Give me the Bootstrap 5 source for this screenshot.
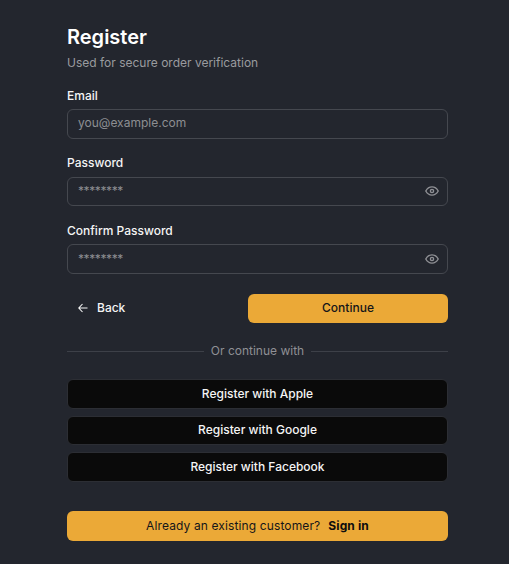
<!doctype html>
<html lang="en">
<head>
<meta charset="utf-8">
<title>Register</title>
<link href="https://cdn.jsdelivr.net/npm/bootstrap@5.3.0/dist/css/bootstrap.min.css" rel="stylesheet">
<style>
html,body{height:100%;}
body{background:#23262e;color:#f5f5f5;font-family:Inter,"Liberation Sans",sans-serif;overflow:hidden;}
.shell{width:381px;margin-left:67px;padding-top:24.5px;}
.ttl{font-size:20px;font-weight:600;line-height:24px;margin:0 0 5px;color:#fff;}
.sub{font-size:12px;line-height:18px;color:#9a9b9f;margin:0 0 15px;}
.fld{height:67.5px;}
.lbl{display:block;font-size:12px;font-weight:500;line-height:18px;margin:0 0 4.5px;color:#f5f5f5;}
.inp-wrap{position:relative;}
.inp{display:block;width:100%;height:29.5px;background:transparent;border:1px solid #45484f;border-radius:6px;padding:0 10px 1px;font-size:12px;color:#fff;outline:0;}
.inp::placeholder{color:#8d8e92;opacity:1;}
.inp-top{padding-bottom:3px;}
.inp-pw::placeholder{letter-spacing:-.4px;}
.eye{position:absolute;right:9px;top:7.5px;width:14px;height:14px;}
.acts{margin-top:4.5px;height:29.5px;}
.back{font-size:12px;font-weight:500;color:#f5f5f5;padding-left:11px;gap:9px;border:0;background:none;}
.cta{width:200px;height:29.5px;background:#eba937;border:0;border-radius:6px;color:#14151a;font-size:12px;font-weight:500;}
.sep{margin:18px 0 18px;height:20px;gap:7px;font-size:12px;color:#8f9095;}
.sep i{flex:1;height:1px;background:#3d4048;}
.soc{height:29.5px;background:#0a0a0a;border:1px solid #2c2e34;border-radius:6px;color:#f5f5f5;font-size:12px;font-weight:500;width:100%;}
.stack{gap:7px;}
.ban{margin-top:29px;height:30px;background:#eba937;border-radius:6px;color:#14151a;font-size:12px;gap:8px;letter-spacing:.12px;}
.ban b{font-weight:700;color:#0d0d0f;}
</style>
</head>
<body>
<main class="shell">
  <h1 class="ttl">Register</h1>
  <p class="sub">Used for secure order verification</p>
  <div class="fld">
    <label class="lbl" for="e">Email</label>
    <div class="inp-wrap"><input class="inp inp-top" id="e" type="text" placeholder="you@example.com"></div>
  </div>
  <div class="fld">
    <label class="lbl" for="p">Password</label>
    <div class="inp-wrap"><input class="inp inp-pw" id="p" type="text" placeholder="********">
      <svg class="eye" viewBox="0 0 14 14" fill="none" stroke="#8f9095" stroke-width="1.4"><path d="M.8 7C2.200 4.400 4.400 2.900 7 2.900s4.800 1.500 6.200 4.100c-1.400 2.600-3.600 4.100-6.200 4.100S2.200 9.600.8 7z"/><circle cx="7" cy="7" r="1.600"/></svg>
    </div>
  </div>
  <div class="fld">
    <label class="lbl" for="c">Confirm Password</label>
    <div class="inp-wrap"><input class="inp inp-pw" id="c" type="text" placeholder="********">
      <svg class="eye" viewBox="0 0 14 14" fill="none" stroke="#8f9095" stroke-width="1.4"><path d="M.8 7C2.200 4.400 4.400 2.900 7 2.900s4.800 1.500 6.200 4.100c-1.400 2.600-3.600 4.100-6.200 4.100S2.200 9.600.8 7z"/><circle cx="7" cy="7" r="1.600"/></svg>
    </div>
  </div>
  <div class="acts d-flex justify-content-between align-items-center">
    <button class="back d-flex align-items-center" type="button">
      <svg width="10" height="10" viewBox="0 0 10 10" fill="none" stroke="#f5f5f5" stroke-width="1.100"><path d="M9.500 5H.8M4.500 1 .8 5l3.700 4"/></svg>
      Back
    </button>
    <button class="cta" type="button">Continue</button>
  </div>
  <div class="sep d-flex align-items-center"><i></i><span>Or continue with</span><i></i></div>
  <div class="stack d-flex flex-column">
    <button class="soc" type="button">Register with Apple</button>
    <button class="soc" type="button">Register with Google</button>
    <button class="soc" type="button">Register with Facebook</button>
  </div>
  <div class="ban d-flex justify-content-center align-items-center"><span>Already an existing customer?</span><b>Sign in</b></div>
</main>
<script src="https://cdn.jsdelivr.net/npm/bootstrap@5.3.0/dist/js/bootstrap.bundle.min.js"></script>
</body>
</html>
